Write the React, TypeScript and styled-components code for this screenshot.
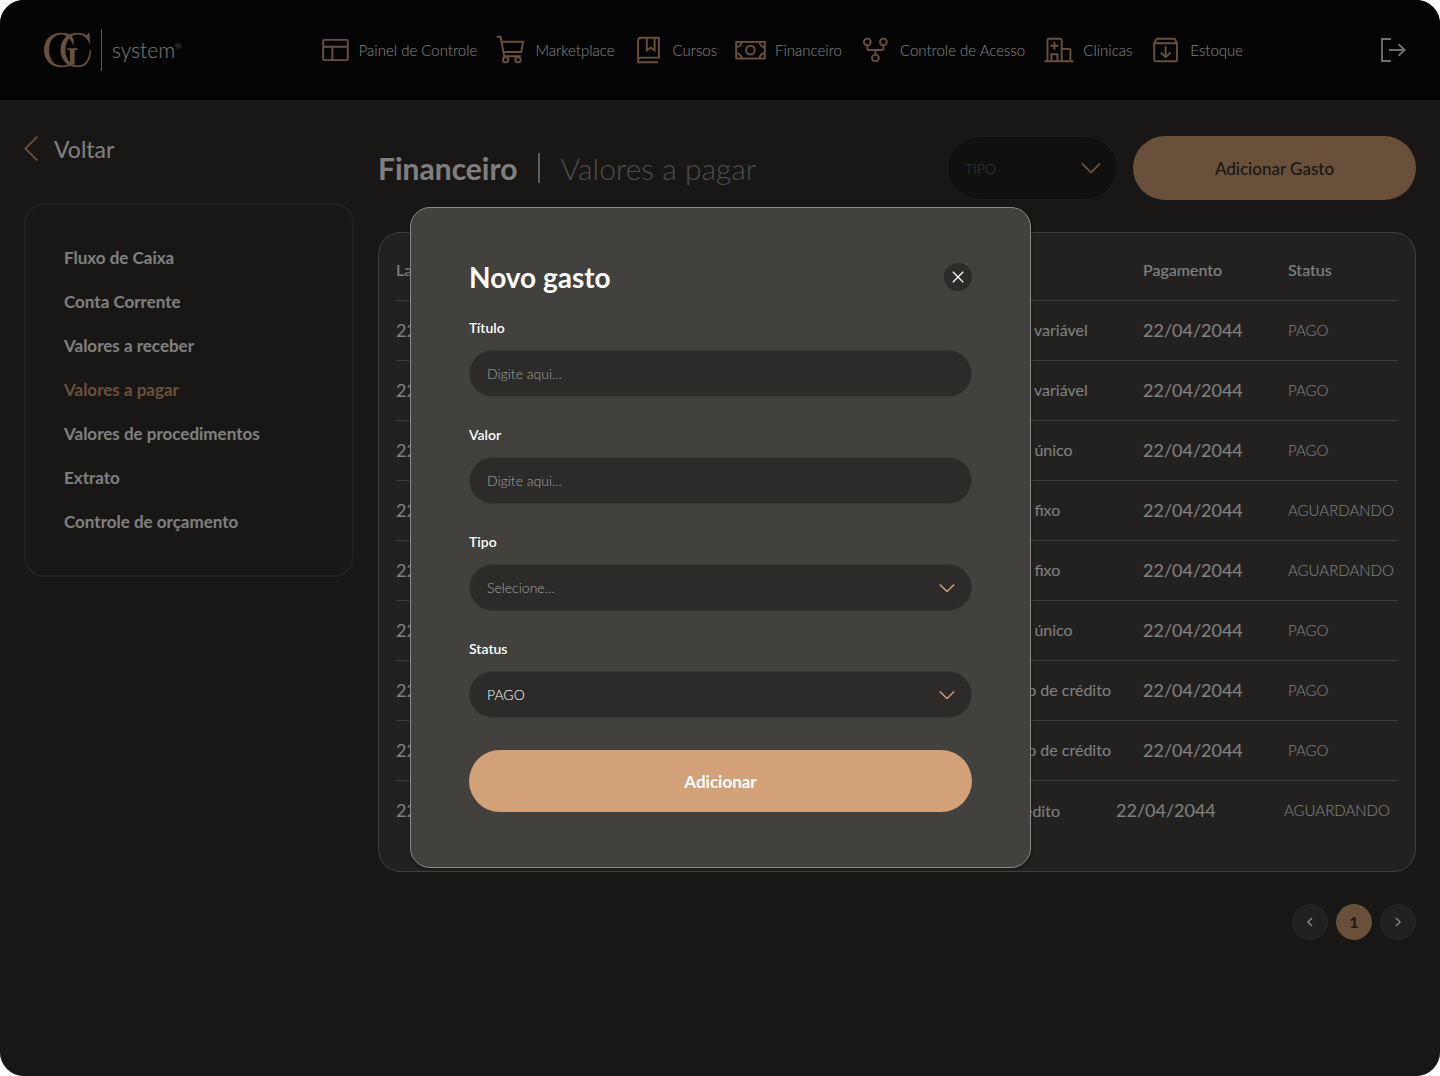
import React from "react";
import styled, { createGlobalStyle } from "styled-components";

const GlobalStyle = createGlobalStyle`
  *, *::before, *::after { box-sizing: border-box; }
  body { margin: 0; background: #fff; }
  body, button, input, select { font-family: Lato, "Open Sans", sans-serif; }
  button { cursor: pointer; border: 0; padding: 0; background: none; }
  a { color: inherit; text-decoration: none; }
`;

const copper = "#d2a177";

const Screen = styled.div`
  position: relative;
  min-height: 100vh;
  display: flex;
  flex-direction: column;
  overflow: hidden;
  border-radius: 24px;
  background: #302e2a;
  color: #fff;
`;

const TopBar = styled.header`
  display: flex;
  align-items: center;
  justify-content: space-between;
  height: 100px;
  padding: 0 32px 0 44px;
  background: #090909;
`;

const Brand = styled.a`
  display: flex;
  align-items: center;
  gap: 10px;
`;

const BrandName = styled.span`
  display: flex;
  padding-left: 10px;
  border-left: 1px solid #bbb;
  font-size: 21px;
  font-weight: 300;
  line-height: 42px;
  color: #eee;
`;

const Registered = styled.span`
  font-size: 8px;
  line-height: 34px;
`;

const Nav = styled.nav`
  display: flex;
  gap: 18px;
`;

const NavLink = styled.a`
  display: flex;
  align-items: center;
  gap: 8px;
  font-size: 15px;
  font-weight: 300;
  line-height: 32px;
  white-space: nowrap;
`;

const NavIcon = styled.svg`
  width: 32px;
  height: 32px;
  fill: none;
  stroke: ${copper};
  stroke-width: 1.9;
`;

const LogoutButton = styled.button`
  display: flex;
`;

const Body = styled.div`
  display: grid;
  grid-template-columns: 330px minmax(0, 1fr);
  gap: 24px;
  align-items: start;
  padding: 36px 24px;
`;

const BackLink = styled.a`
  display: flex;
  align-items: center;
  gap: 16px;
  height: 25px;
  margin-bottom: 42px;
  font-size: 23px;
  font-weight: 400;
  line-height: 24px;
`;

const SideMenu = styled.ul`
  display: grid;
  gap: 20px;
  margin: 0;
  padding: 41px 38px;
  list-style: none;
  border: 2px solid #42413e;
  border-radius: 20px;
  font-size: 17px;
  font-weight: 700;
  line-height: 24px;
`;

const SideLink = styled.a<{ $active: boolean }>`
  color: ${(p) => (p.$active ? copper : "#fff")};
`;

const Content = styled.main`
  display: grid;
  gap: 32px;
`;

const TitleRow = styled.div`
  display: flex;
  align-items: center;
  gap: 15px;
  height: 64px;
`;

const Title = styled.h1`
  display: flex;
  align-items: center;
  flex: 1;
  margin: 0;
  font-size: 30px;
  font-weight: 700;
  line-height: 30px;
`;

const SubTitle = styled.span`
  margin-left: 21px;
  padding-left: 20px;
  border-left: 2px solid #bbb;
  font-weight: 300;
  color: #999;
`;

const SelectBox = styled.div`
  display: grid;
  align-items: center;
`;

const Chevron = styled.svg`
  grid-area: 1 / 1;
  justify-self: end;
  margin-right: 17px;
  fill: none;
  stroke: ${copper};
  stroke-width: 1.8;
  pointer-events: none;
`;

const FilterSelect = styled.select`
  grid-area: 1 / 1;
  appearance: none;
  width: 171px;
  height: 64px;
  padding: 0 17px;
  border: 1px solid #383838;
  border-radius: 32px;
  background: #212121;
  color: #777;
  font-size: 14px;
  font-weight: 300;
`;

const AddExpense = styled.button`
  width: 283px;
  height: 64px;
  border-radius: 32px;
  background: ${copper};
  color: #302e2a;
  font-size: 17px;
  font-weight: 500;
`;

const TablePanel = styled.section`
  min-height: 640px;
  padding: 8px 17px 30px;
  border: 1px solid #7d7d7b;
  border-radius: 22px;
  background: #444340;
`;

const Table = styled.table`
  display: block;
  color: #fff;

  thead, tbody { display: block; }
`;

const Row = styled.tr<{ $loose?: boolean }>`
  display: grid;
  grid-template-columns: ${(p) =>
    p.$loose ? "minmax(0, 1fr) 178px 168px 114px" : "minmax(0, 1fr) 154px 145px 110px"};
  align-items: center;
  height: 60px;
  border-bottom: ${(p) => (p.$loose ? "0" : "1px solid #7d7d7b")};
`;

const HeadCell = styled.th`
  padding: 0 0 2px;
  text-align: left;
  font-size: 16px;
  font-weight: 500;
`;

const Cell = styled.td<{ $kind?: "date" | "status" }>`
  padding: 0 0 2px;
  white-space: nowrap;
  font-size: ${(p) => (p.$kind === "date" ? 18 : p.$kind === "status" ? 15 : 16)}px;
  font-weight: ${(p) => (p.$kind === "status" ? 300 : 400)};
`;

const Pager = styled.nav`
  display: flex;
  justify-content: flex-end;
  gap: 8px;
`;

const PageButton = styled.button<{ $current?: boolean }>`
  display: grid;
  place-items: center;
  width: 36px;
  height: 36px;
  border: 1px solid ${(p) => (p.$current ? copper : "#504f4c")};
  border-radius: 50%;
  background: ${(p) => (p.$current ? copper : "#444340")};
  color: ${(p) => (p.$current ? "#302e2a" : "#fff")};
  font-size: 16px;
  font-weight: 700;
  line-height: 16px;
`;

const Overlay = styled.div`
  position: absolute;
  inset: 0;
  display: flex;
  align-items: center;
  justify-content: center;
  padding: 0 0 1px 1px;
  background: rgba(0, 0, 0, 0.5);
`;

const Dialog = styled.form`
  width: 621px;
  max-width: 100%;
  padding: 55px 58px;
  border: 1px solid #8c8b89;
  border-radius: 20px;
  background: #42413e;
  box-shadow: 0 1px 3px rgba(0, 0, 0, 0.4);
`;

const DialogHead = styled.div`
  display: flex;
  align-items: center;
  justify-content: space-between;
  height: 28px;
  margin-bottom: 27px;
`;

const DialogTitle = styled.h2`
  margin: 0;
  font-size: 28px;
  font-weight: 700;
  line-height: 28px;
`;

const CloseButton = styled.button`
  display: grid;
  place-items: center;
  width: 28px;
  height: 28px;
  border-radius: 50%;
  background: #2c2b29;
`;

const Fields = styled.div`
  display: grid;
  gap: 28px;
`;

const Field = styled.div`
  display: grid;
  gap: 12px;
`;

const Label = styled.label`
  font-size: 14px;
  font-weight: 600;
  line-height: 20px;
`;

const TextInput = styled.input`
  width: 100%;
  height: 47px;
  padding: 0 17px;
  border: 1px solid #383735;
  border-radius: 24px;
  background: #2c2b29;
  color: #fff;
  font-size: 14px;
  font-weight: 300;

  &::placeholder { color: #a3a2a0; }
`;

const FieldSelect = styled(TextInput).attrs({ as: "select" })<{ $empty: boolean }>`
  grid-area: 1 / 1;
  appearance: none;
  color: ${(p) => (p.$empty ? "#a3a2a0" : "#fff")};
`;

const SubmitButton = styled.button`
  width: 100%;
  height: 62px;
  margin-top: 32px;
  border-radius: 31px;
  background: ${copper};
  color: #fff;
  font-size: 17px;
  font-weight: 700;
`;

const navItems: { label: string; icon: React.ReactNode }[] = [
  {
    label: "Painel de Controle",
    icon: (
      <>
        <rect x="4.2" y="5.9" width="24.6" height="20.2" rx="1" />
        <path d="M4.2 12.7H28.8M13.4 12.7V26.1" />
      </>
    ),
  },
  {
    label: "Marketplace",
    icon: (
      <>
        <path d="M1.7 2.8H5.6L9.2 22.2H25.6M6.6 7.7H28.2L26.2 18H8.4" />
        <circle cx="10.7" cy="25.7" r="2.7" />
        <circle cx="23" cy="25.7" r="2.7" />
      </>
    ),
  },
  {
    label: "Cursos",
    icon: (
      <>
        <path d="M25.1 28.2H5.1V6.8A3 3 0 0 1 8.1 3.8H25.9V23.6H8.1A3 3 0 0 0 5.1 26" />
        <path d="M13.8 3.8V16.4L17.7 13.6L21.6 16.4V3.8" />
      </>
    ),
  },
  {
    label: "Financeiro",
    icon: (
      <>
        <rect x="1.2" y="7.9" width="28.6" height="16.6" />
        <circle cx="15.4" cy="16.1" r="4.4" />
        <path d="M1.2 13.2A5.3 5.3 0 0 0 6.5 7.9M24.5 7.9A5.3 5.3 0 0 0 29.8 13.2M29.8 19.2A5.3 5.3 0 0 0 24.5 24.5M6.5 24.5A5.3 5.3 0 0 0 1.2 19.2" />
      </>
    ),
  },
  {
    label: "Controle de Acesso",
    icon: (
      <>
        <circle cx="7.3" cy="8" r="3.4" />
        <circle cx="23.4" cy="8" r="3.4" />
        <circle cx="15.4" cy="24" r="3.4" />
        <path d="M7.3 11.4V14.2A1.8 1.8 0 0 0 9.1 16H21.6A1.8 1.8 0 0 0 23.4 14.2V11.4M15.4 16V20.6" />
      </>
    ),
  },
  {
    label: "Clínicas",
    icon: (
      <>
        <path d="M1.3 27.2H30.7M4.5 27.2V6A1.2 1.2 0 0 1 5.7 4.8H17.5A1.2 1.2 0 0 1 18.7 6V27.2M18.7 14.9H26.2A1.2 1.2 0 0 1 27.4 16.1V27.2" />
        <path d="M11.4 7.7V15.7M7.4 11.7H15.4M8.4 27.2V20.3H14.4V27.2" />
      </>
    ),
  },
  {
    label: "Estoque",
    icon: (
      <>
        <path d="M4.2 9.2V26A1.2 1.2 0 0 0 5.4 27.2H25.8A1.2 1.2 0 0 0 27 26V9.2L24.9 5.4A1 1 0 0 0 24 4.8H7.2A1 1 0 0 0 6.3 5.4L4.2 9.2H27" />
        <path d="M15.6 12.2V23M10.7 18.4L15.6 23.2L20.5 18.4" />
      </>
    ),
  },
];

const sideItems = [
  "Fluxo de Caixa",
  "Conta Corrente",
  "Valores a receber",
  "Valores a pagar",
  "Valores de procedimentos",
  "Extrato",
  "Controle de orçamento",
];

const expenses = [
  { type: "Gasto variável", status: "PAGO" },
  { type: "Gasto variável", status: "PAGO" },
  { type: "Gasto único", status: "PAGO" },
  { type: "Gasto fixo", status: "AGUARDANDO" },
  { type: "Gasto fixo", status: "AGUARDANDO" },
  { type: "Gasto único", status: "PAGO" },
  { type: "Cartão de crédito", status: "PAGO" },
  { type: "Cartão de crédito", status: "PAGO" },
  { type: "Cartão de crédito", status: "AGUARDANDO" },
];

const Monogram = () => (
  <svg width="47" height="36" viewBox="0 0 47 36" fill={copper} aria-hidden="true">
    <path d="M29.6 14C27.4 7.4 23 2.4 17.5 2.4C9.8 2.4 5 8.6 5 18C5 27.4 9.8 33.6 17.5 33.6C21.3 33.6 24.4 32.6 26.6 30.4L28.4 32C25.4 34.2 21.6 35.3 17.5 35.3C7 35.3 0 28 0 18C0 8 7 .8 17.5 .8C21.8 .8 25.2 1.8 27.8 3.8L28.4 5.6L29.6 7.6Z" />
    <path d="M46.2 13C44 6.6 40 2.4 34 2.4C26.4 2.4 21.4 8.6 21.4 18C21.4 27.4 26.4 33.6 34 33.6C40.8 33.6 45 28 45.8 18H47C47 28.5 42.4 35.3 34 35.3C23.6 35.3 16.5 28 16.5 18C16.5 8 23.6 .8 34 .8C37.6 .8 40.6 1.8 42.8 3.6L44.6 .8H45.4Z" />
    <path d="M23.3 16.2H33.6V17.4C31.6 17.5 30.6 18 30.6 19.8V32.8C28.4 32.6 27 31.8 25.4 30.2L26 29.4V19.8C26 18 25.2 17.5 23.3 17.4Z" />
  </svg>
);

const Down = ({ size }: { size: number }) => (
  <Chevron width={size} height={size / 2 + 2} viewBox="0 0 20 12" aria-hidden="true">
    <path d="M1 1.5L10 10.5L19 1.5" />
  </Chevron>
);

export default function App() {
  return (
    <Screen>
      <GlobalStyle />
      <TopBar>
        <Brand href="#">
          <Monogram />
          <BrandName>
            system<Registered>®</Registered>
          </BrandName>
        </Brand>
        <Nav>
          {navItems.map((item) => (
            <NavLink href="#" key={item.label}>
              <NavIcon viewBox="0 0 32 32" aria-hidden="true">{item.icon}</NavIcon>
              {item.label}
            </NavLink>
          ))}
        </Nav>
        <LogoutButton aria-label="Sair">
          <svg width="28" height="28" viewBox="0 0 28 28" fill="none" stroke="#ddd" strokeWidth="1.9">
            <path d="M11 3H2V25H11M9 14H24.4M18.6 8.2L24.6 14L18.6 19.8" />
          </svg>
        </LogoutButton>
      </TopBar>

      <Body>
        <aside>
          <BackLink href="#">
            <svg width="14" height="25" viewBox="0 0 14 25" fill="none" stroke={copper} strokeWidth="1.8" aria-hidden="true">
              <path d="M13.4 0.6L1.2 12.5L13.4 24.4" />
            </svg>
            Voltar
          </BackLink>
          <SideMenu>
            {sideItems.map((label) => (
              <li key={label}>
                <SideLink href="#" $active={label === "Valores a pagar"}>{label}</SideLink>
              </li>
            ))}
          </SideMenu>
        </aside>

        <Content>
          <TitleRow>
            <Title>
              Financeiro<SubTitle>Valores a pagar</SubTitle>
            </Title>
            <SelectBox>
              <FilterSelect aria-label="Tipo de gasto">
                <option>TIPO</option>
              </FilterSelect>
              <Down size={20} />
            </SelectBox>
            <AddExpense>Adicionar Gasto</AddExpense>
          </TitleRow>

          <TablePanel>
            <Table>
              <thead>
                <Row>
                  <HeadCell>Lançamento</HeadCell>
                  <HeadCell>Tipo</HeadCell>
                  <HeadCell>Pagamento</HeadCell>
                  <HeadCell>Status</HeadCell>
                </Row>
              </thead>
              <tbody>
                {expenses.map((item, i) => (
                  <Row key={i} $loose={i === expenses.length - 1}>
                    <Cell $kind="date">22/04/2044</Cell>
                    <Cell>{item.type}</Cell>
                    <Cell $kind="date">22/04/2044</Cell>
                    <Cell $kind="status">{item.status}</Cell>
                  </Row>
                ))}
              </tbody>
            </Table>
          </TablePanel>

          <Pager aria-label="Paginação">
            <PageButton aria-label="Anterior">
              <svg width="8" height="10" viewBox="0 0 8 10" fill="none" stroke="currentColor" strokeWidth="1.6">
                <path d="M6 1L2 5L6 9" />
              </svg>
            </PageButton>
            <PageButton $current>1</PageButton>
            <PageButton aria-label="Próxima">
              <svg width="8" height="10" viewBox="0 0 8 10" fill="none" stroke="currentColor" strokeWidth="1.6">
                <path d="M2 1L6 5L2 9" />
              </svg>
            </PageButton>
          </Pager>
        </Content>
      </Body>

      <Overlay>
        <Dialog role="dialog" aria-labelledby="dialog-title" onSubmit={(e) => e.preventDefault()}>
          <DialogHead>
            <DialogTitle id="dialog-title">Novo gasto</DialogTitle>
            <CloseButton type="button" aria-label="Fechar">
              <svg width="12" height="12" viewBox="0 0 12 12" stroke="#fff" strokeWidth="1.3">
                <path d="M0.8 0.8L11.2 11.2M11.2 0.8L0.8 11.2" />
              </svg>
            </CloseButton>
          </DialogHead>
          <Fields>
            <Field>
              <Label htmlFor="titulo">Título</Label>
              <TextInput id="titulo" placeholder="Digite aqui..." />
            </Field>
            <Field>
              <Label htmlFor="valor">Valor</Label>
              <TextInput id="valor" placeholder="Digite aqui..." />
            </Field>
            <Field>
              <Label htmlFor="tipo">Tipo</Label>
              <SelectBox>
                <FieldSelect id="tipo" $empty>
                  <option>Selecione...</option>
                </FieldSelect>
                <Down size={16} />
              </SelectBox>
            </Field>
            <Field>
              <Label htmlFor="status">Status</Label>
              <SelectBox>
                <FieldSelect id="status" $empty={false}>
                  <option>PAGO</option>
                  <option>AGUARDANDO</option>
                </FieldSelect>
                <Down size={16} />
              </SelectBox>
            </Field>
          </Fields>
          <SubmitButton type="submit">Adicionar</SubmitButton>
        </Dialog>
      </Overlay>
    </Screen>
  );
}
